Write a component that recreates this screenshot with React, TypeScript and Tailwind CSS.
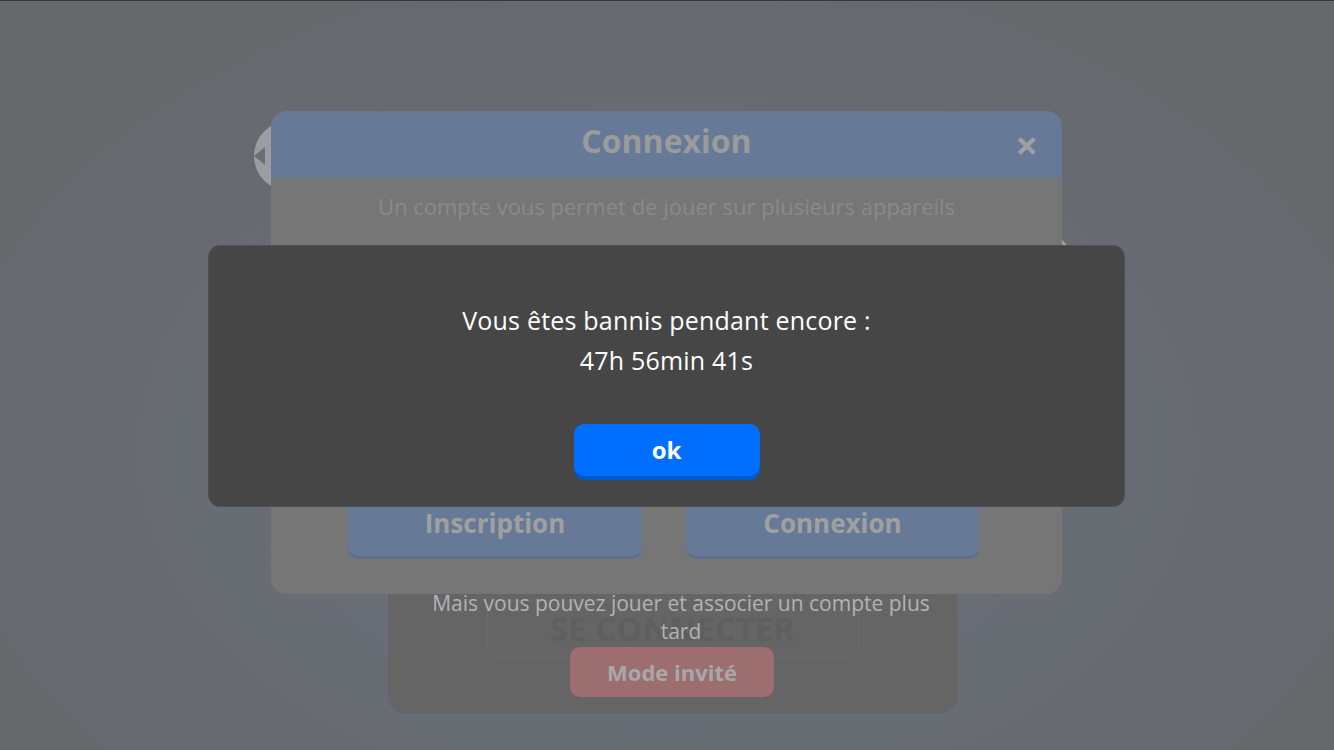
import React from 'react';

const font = { fontFamily: '"Open Sans", "Noto Sans", sans-serif' };

const BackCircle = ({ className }: { className: string }) => (
  <div className={`absolute rounded-full bg-[#9b9da0] ${className}`}>
    <div className="absolute left-0 top-1/2 h-0 w-0 -translate-y-1/2 border-y-[9px] border-r-[11px] border-y-transparent border-r-[#6c6e71]" />
  </div>
);

const BanDialog = () => (
  <div className="absolute left-[208px] top-[244px] flex h-[262px] w-[917px] flex-col items-center rounded-[12px] border border-[#505050] bg-[#464646] pt-[54px]">
    <p className="text-center text-[25px] leading-[40px] tracking-[0.2px] text-white">
      Vous êtes bannis pendant encore :
      <br />
      47h 56min 41s
    </p>
    <button className="mt-[44px] h-[52px] w-[186px] rounded-[10px] bg-[#006fff] text-[24px] font-bold text-white shadow-[0_4px_0_#0058c9]">
      ok
    </button>
  </div>
);

export default function App() {
  return (
    <div
      style={font}
      className="relative h-[750px] w-[1334px] overflow-hidden border-t border-[#2e3a48] bg-[radial-gradient(ellipse_at_50%_60%,#6a7482_0%,#686d74_45%,#66686c_80%)]"
    >
      {/* back panel */}
      <div className="absolute left-[388px] top-[300px] flex h-[412px] w-[569px] flex-col items-center justify-end rounded-[16px] bg-[#656566] pb-[55px]">
        <div className="flex h-[58px] w-[372px] items-center justify-center rounded-[12px] border border-[#6b6b6b] text-[33px] font-bold text-[#5f5f5f]">
          SE CONNECTER
        </div>
      </div>

      <BackCircle className="left-[254px] top-[120px] h-[70px] w-[70px]" />
      <div className="absolute left-[262px] top-[236px] h-[70px] w-[70px] rounded-full bg-[#9b9da0]" />
      <div className="absolute left-[1004px] top-[230px] h-[70px] w-[70px] rounded-full bg-[#9b9da0]" />

      {/* Mais vous pouvez… / Mode invité */}
      <div className="absolute left-[412px] top-[588px] flex w-[520px] flex-col items-center">
        <p className="pl-[18px] text-center text-[21px] leading-[28px] text-[#b3b3b3]">
          Mais vous pouvez jouer et associer un compte plus tard
        </p>
        <button className="mt-[2px] h-[50px] w-[204px] rounded-[10px] bg-[#9c6e70] text-[22px] font-bold text-[#a8a8a8]">
          Mode invité
        </button>
      </div>

      {/* Connexion modal */}
      <div className="absolute left-[271px] top-[110px] flex h-[483px] w-[791px] flex-col overflow-hidden rounded-[16px] bg-[#767676]">
        <div className="relative flex h-[67px] items-center justify-center bg-[#667a98] pb-[8px]">
          <span className="text-[32px] font-bold text-[#9b9b9b]">Connexion</span>
          <span className="absolute right-[24px] top-[14px] text-[40px] font-bold leading-none text-[#a0a0a0]">×</span>
        </div>
        <p className="mt-[12px] text-center text-[22px] text-[#8a8a8a]">
          Un compte vous permet de jouer sur plusieurs appareils
        </p>
        <div className="mt-auto mb-[38px] flex justify-center gap-[44px] pr-[6px]">
          <div className="flex h-[62px] w-[294px] items-end justify-center rounded-[10px] bg-[#667a98] pb-[13px] text-[26px] font-bold text-[#a0a0a0] shadow-[0_3px_0_#5e6f8c]">
            Inscription
          </div>
          <div className="flex h-[62px] w-[293px] items-end justify-center rounded-[10px] bg-[#667a98] pb-[13px] text-[26px] font-bold text-[#a0a0a0] shadow-[0_3px_0_#5e6f8c]">
            Connexion
          </div>
        </div>
      </div>

      <BanDialog />
    </div>
  );
}
